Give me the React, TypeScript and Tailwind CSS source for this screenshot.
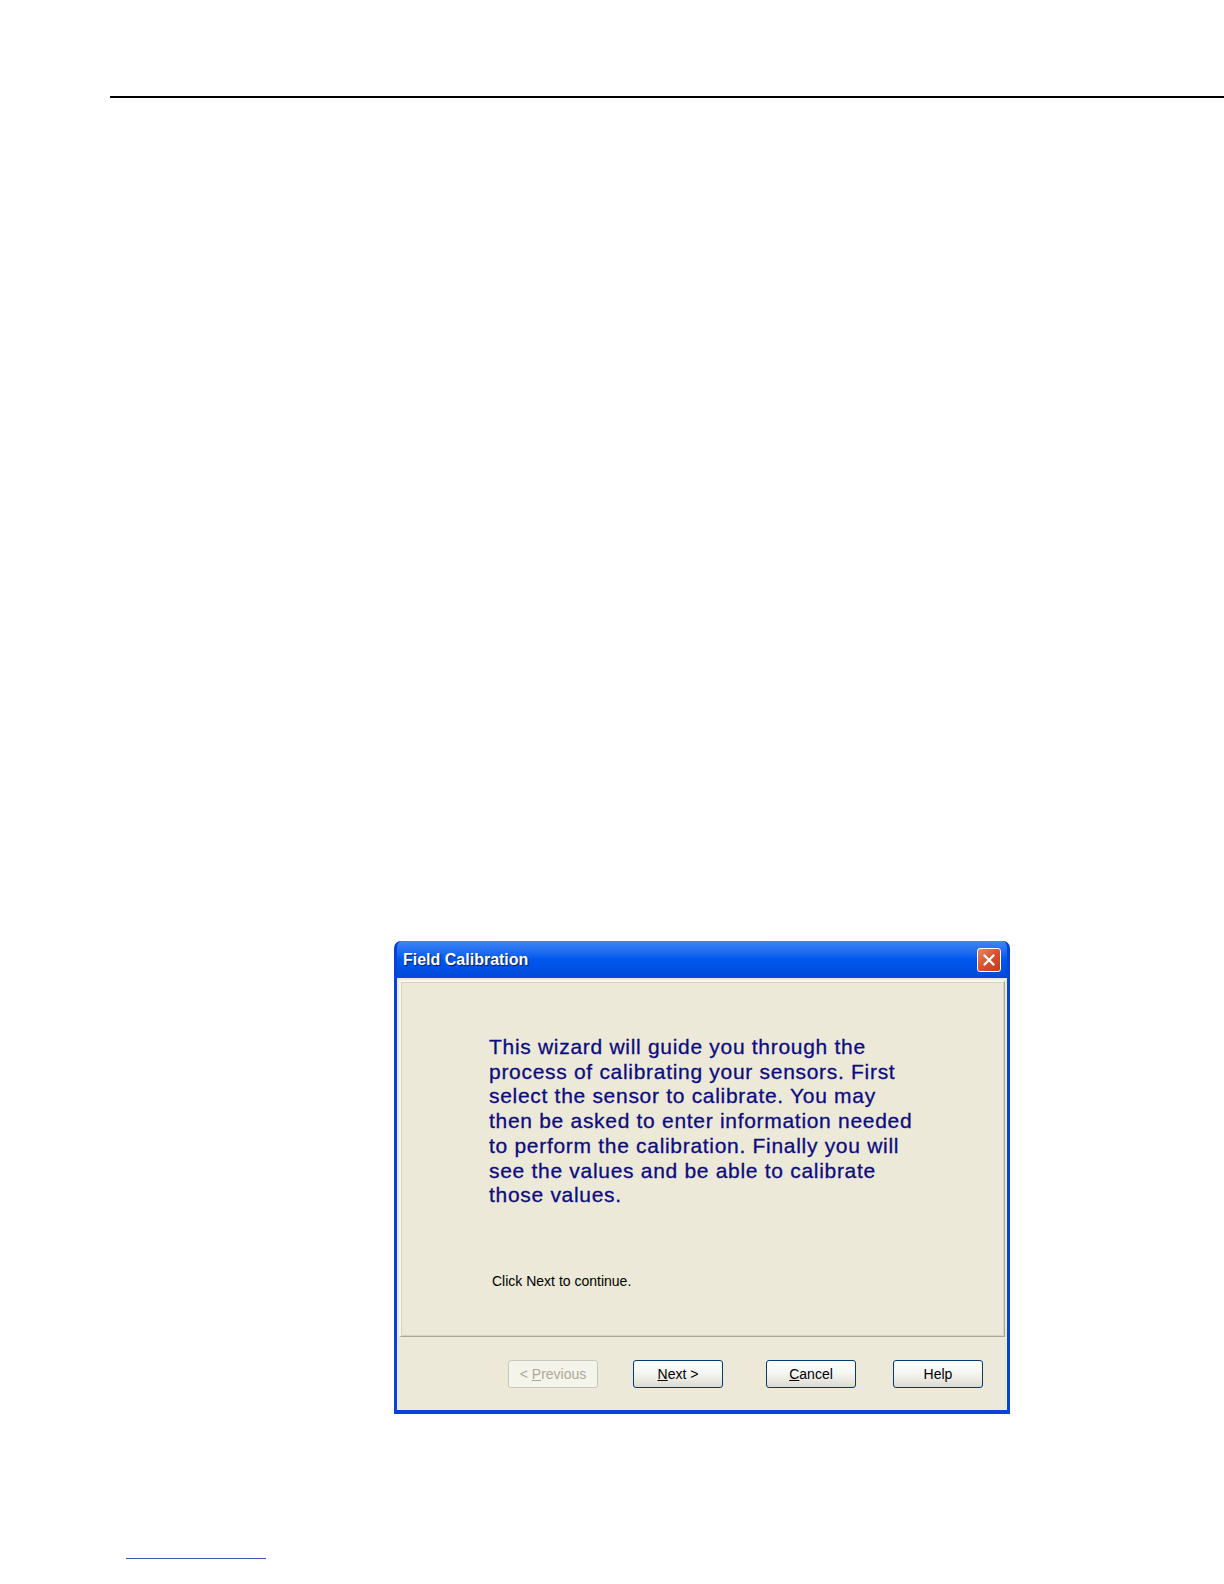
import React from 'react'

const sans = '"Liberation Sans", Arial, sans-serif'

function XpButton({ label, hot, disabled }: { label: string; hot?: number; disabled?: boolean }) {
  const before = hot === undefined ? label : label.slice(0, hot)
  const key = hot === undefined ? '' : label.slice(hot, hot + 1)
  const after = hot === undefined ? '' : label.slice(hot + 1)
  return (
    <button
      className={
        disabled
          ? 'w-[90px] h-[28px] rounded-[3px] border border-[#c9c7ba] bg-[#f5f4ea] text-[14px] text-[#aca899] flex items-center justify-center'
          : 'w-[90px] h-[28px] rounded-[3px] border border-[#003c74] bg-gradient-to-b from-[#ffffff] via-[#f4f4f0] to-[#dcdad0] text-[14px] text-black flex items-center justify-center'
      }
      style={{ fontFamily: sans }}
    >
      <span className="whitespace-pre">
        {before}
        {key && <span className="underline">{key}</span>}
        {after}
      </span>
    </button>
  )
}

const lines = [
  'This wizard will guide you through the',
  'process of calibrating your sensors. First',
  'select the sensor to calibrate. You may',
  'then be asked to enter information needed',
  'to perform the calibration. Finally you will',
  'see the values and be able to calibrate',
  'those values.',
]

export default function App() {
  return (
    <div className="w-[1224px] h-[1584px] bg-white pt-[96px] flex flex-col" style={{ fontFamily: sans }}>
      <div className="ml-[110px] h-[2px] bg-black" />

      <div className="mt-[843px] ml-[394px] w-[616px] h-[473px] flex flex-col rounded-t-[7px] bg-[#0831d9] border-x-[3px] border-b-[4px] border-[#0842d6] overflow-hidden">
        {/* title bar */}
        <div className="h-[37px] -mx-[3px] px-[9px] flex items-center justify-between bg-gradient-to-b from-[#3d85f5] via-[#0058ee] to-[#0048d8]">
          <span className="text-white font-bold text-[16px] [text-shadow:1px_1px_1px_#0a1a6a]">Field Calibration</span>
          <div className="w-[24px] h-[24px] rounded-[3px] border border-white bg-gradient-to-br from-[#e8866a] via-[#d8502e] to-[#c23a1a] flex items-center justify-center">
            <svg width="14" height="14" viewBox="0 0 14 14">
              <path d="M2.5 2.5 L11.5 11.5 M11.5 2.5 L2.5 11.5" stroke="white" strokeWidth="2.4" strokeLinecap="round" />
            </svg>
          </div>
        </div>

        {/* body */}
        <div className="flex-1 bg-[#ece9d8] flex flex-col">
          <div className="mx-[2px] mt-[2px] h-[357px] border-t-[2px] border-l-[2px] border-[#f8f7f2] border-r border-b border-r-[#aca899] border-b-[#aca899] shadow-[inset_0_0_0_1px_#d6d3c4] pl-[88px] pt-[53px] flex flex-col">
            <div className="text-[21px] leading-[24.7px] tracking-[0.7px] text-[#0c0c80] [-webkit-text-stroke:0.3px_#0c0c80] whitespace-nowrap">
              {lines.map((l) => (
                <div key={l}>{l}</div>
              ))}
            </div>
            <p className="mt-[63px] ml-[3px] text-[14px] text-black">Click Next to continue.</p>
          </div>
          <div className="pt-[23px] pl-[111px] flex gap-[35px]">
            <XpButton label="< Previous" hot={2} disabled />
            <XpButton label="Next >" hot={0} />
            <div className="ml-[8px] flex gap-[37px]">
              <XpButton label="Cancel" hot={0} />
              <XpButton label="Help" />
            </div>
          </div>
        </div>
      </div>

      <div className="mt-[144px] ml-[126px] w-[140px] h-px bg-[#3a5ab8]" />
    </div>
  )
}
